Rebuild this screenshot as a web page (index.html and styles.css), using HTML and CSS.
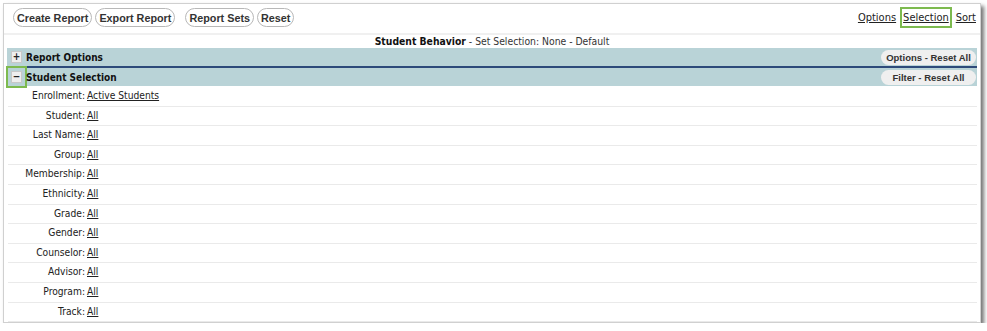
FILE: index.html
```html
<!DOCTYPE html>
<html>
<head>
    <title>Student Behavior</title>
    <meta charset="UTF-8">
    <link rel="stylesheet" href="styles.css">
</head>
<body>
    <div class="panel">
        <div class="toolbar">
            <div class="btn-group">
                <button class="pill">Create Report</button>
                <button class="pill">Export Report</button>
                <button class="pill spaced">Report Sets</button>
                <button class="pill">Reset</button>
            </div>
            <div class="tabs">
                <a href="#">Options</a>
                <a href="#" class="tab-active">Selection</a>
                <a href="#">Sort</a>
            </div>
        </div>

        <div class="report-title"><b>Student Behavior</b> - Set Selection: None - Default</div>

        <div class="section-bar first">
            <span class="toggle">+</span>
            <span class="section-name">Report Options</span>
            <span class="reset-pill">Options - Reset All</span>
        </div>
        <div class="section-bar">
            <span class="toggle toggle-active">&minus;</span>
            <span class="section-name">Student Selection</span>
            <span class="reset-pill">Filter - Reset All</span>
        </div>

        <div class="criteria">
            <div class="row"><span class="label">Enrollment:</span><a href="#">Active Students</a></div>
            <div class="row"><span class="label">Student:</span><a href="#">All</a></div>
            <div class="row"><span class="label">Last Name:</span><a href="#">All</a></div>
            <div class="row"><span class="label">Group:</span><a href="#">All</a></div>
            <div class="row"><span class="label">Membership:</span><a href="#">All</a></div>
            <div class="row"><span class="label">Ethnicity:</span><a href="#">All</a></div>
            <div class="row"><span class="label">Grade:</span><a href="#">All</a></div>
            <div class="row"><span class="label">Gender:</span><a href="#">All</a></div>
            <div class="row"><span class="label">Counselor:</span><a href="#">All</a></div>
            <div class="row"><span class="label">Advisor:</span><a href="#">All</a></div>
            <div class="row"><span class="label">Program:</span><a href="#">All</a></div>
            <div class="row"><span class="label">Track:</span><a href="#">All</a></div>
        </div>
    </div>
</body>
</html>
```

FILE: styles.css
```css
body {
    margin: 0;
    background: #ffffff;
    font-family: 'DejaVu Sans Condensed', 'DejaVu Sans', Tahoma, sans-serif;
    font-stretch: condensed;
    font-size: 10px;
    color: #222;
}

.panel {
    margin: 3px 0 0 3px;
    width: 976px;
    height: 318px;
    border: 1px solid #d0d0d0;
    background: #fff;
    box-shadow: 3px 3px 4px rgba(0, 0, 0, 0.55);
    overflow: hidden;
}

.toolbar {
    display: flex;
    justify-content: space-between;
    align-items: flex-start;
    padding: 4px 1px 0 9px;
    height: 25px;
    border-bottom: 2px solid #f0f0f0;
}

.btn-group {
    display: flex;
    gap: 3px;
}

.pill {
    font-family: 'Liberation Sans', Arial, sans-serif;
    font-weight: bold;
    font-size: 10.8px;
    color: #333;
    background: #fff;
    border: 1px solid #b8b8b8;
    border-radius: 10px;
    height: 19px;
    padding: 0 3px;
    cursor: pointer;
}

.pill.spaced {
    margin-left: 7px;
}

.tabs {
    display: flex;
    gap: 1px;
    font-size: 11px;
    margin-top: -1px;
}

.tabs a {
    color: #222;
    padding: 2px 1px;
    border: 2px solid transparent;
}

.tabs a.tab-active {
    border-color: #7dba4f;
}

.report-title {
    text-align: center;
    padding: 0 0 1px;
    line-height: 12px;
    font-size: 10.3px;
    color: #333;
}

.report-title b {
    color: #111;
}

.section-bar {
    display: flex;
    align-items: center;
    margin: 0 3px 0 3px;
    height: 18px;
    background: #b9d3d7;
    padding-left: 4px;
}

.section-bar.first {
    border-bottom: 2px solid #2d4a7a;
}

.toggle {
    width: 9px;
    height: 10px;
    line-height: 10px;
    text-align: center;
    font-weight: bold;
    font-size: 10px;
    background: #eeeeee;
    border: 1px solid #c8c8c8;
    margin-right: 4px;
}

.toggle-active {
    outline: 2px solid #7dba4f;
    outline-offset: 3px;
}

.section-name {
    flex: 1;
    font-weight: bold;
    font-size: 10px;
    color: #111;
}

.reset-pill {
    font-family: 'Liberation Sans', Arial, sans-serif;
    font-weight: bold;
    font-size: 9.5px;
    color: #333;
    background: #efefef;
    border-radius: 8px;
    width: 95px;
    text-align: center;
    height: 15px;
    line-height: 15px;
    margin-right: 1px;
}

.criteria {
    margin: 0 3px 0 4px;
    padding-top: 1px;
}

.row {
    height: 18.6px;
    line-height: 18.6px;
    border-bottom: 1px solid #eaeaea;
    white-space: nowrap;
}

.row .label {
    display: inline-block;
    width: 77px;
    text-align: right;
    margin-right: 2px;
    font-size: 10.2px;
}

.row a {
    color: #222;
    font-size: 10.2px;
}
```
